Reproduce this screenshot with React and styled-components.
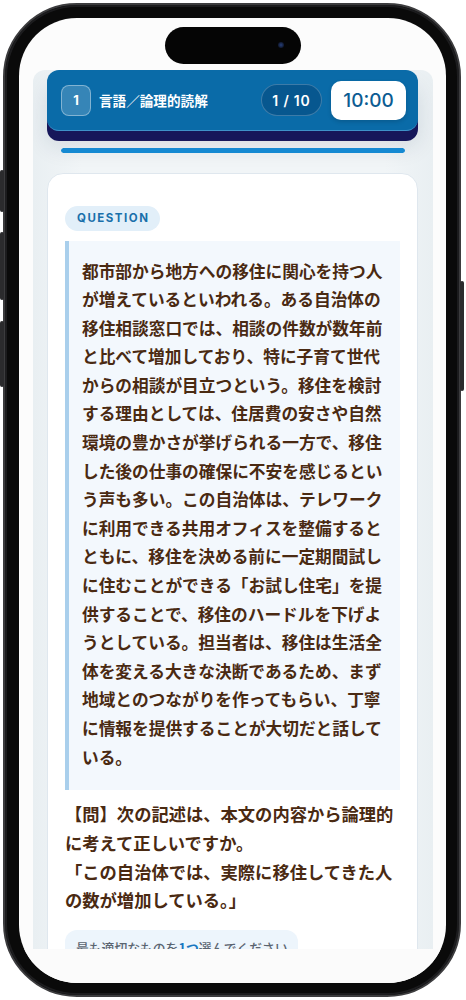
import React from "react"
import styled, { createGlobalStyle } from "styled-components"

const GlobalStyle = createGlobalStyle`
  html, body {
    margin: 0;
    padding: 0;
    background: #ffffff;
  }
  * { box-sizing: border-box; }
`

const passage =
  "都市部から地方への移住に関心を持つ人が増えているといわれる。ある自治体の移住相談窓口では、相談の件数が数年前と比べて増加しており、特に子育て世代からの相談が目立つという。移住を検討する理由としては、住居費の安さや自然環境の豊かさが挙げられる一方で、移住した後の仕事の確保に不安を感じるという声も多い。この自治体は、テレワークに利用できる共用オフィスを整備するとともに、移住を決める前に一定期間試しに住むことができる「お試し住宅」を提供することで、移住のハードルを下げようとしている。担当者は、移住は生活全体を変える大きな決断であるため、まず地域とのつながりを作ってもらい、丁寧に情報を提供することが大切だと話している。"

const sideButtons = [
  { side: "left", top: 165, h: 42 },
  { side: "left", top: 227, h: 68 },
  { side: "left", top: 316, h: 66 },
  { side: "right", top: 276, h: 110 },
]

export default function App() {
  const current = 1
  const total = 10
  const limit = 600
  const remaining = 600
  const mm = String(Math.floor(remaining / 60)).padStart(2, "0")
  const ss = String(remaining % 60).padStart(2, "0")

  return (
    <>
      <GlobalStyle />
      <Page>
        <Phone>
          {sideButtons.map((b, i) => (
            <SideButton key={i} $side={b.side} style={{ top: b.top, height: b.h }} />
          ))}
          <Screen>
            <Island>
              <Camera />
            </Island>
            <AppPanel>
              <Header>
                <Section>{current}</Section>
                <Title>言語／論理的読解</Title>
                <Counter>{current} / {total}</Counter>
                <Timer>{mm}:{ss}</Timer>
              </Header>
              <Progress>
                <ProgressFill style={{ width: `${(remaining / limit) * 100}%` }} />
              </Progress>
              <Card>
                <Tag>QUESTION</Tag>
                <Passage>{passage}</Passage>
                <Prompt>
                  【問】次の記述は、本文の内容から論理的に考えて正しいですか。
                  <br />
                  「この自治体では、実際に移住してきた人の数が増加している。」
                </Prompt>
                <Hint>
                  最も適切なものを<strong>1つ</strong>選んでください
                </Hint>
              </Card>
            </AppPanel>
            <HomeArea />
          </Screen>
        </Phone>
      </Page>
    </>
  )
}

const Page = styled.div`
  width: 466px;
  height: 1000px;
  padding: 3px;
  background: #ffffff;
`

const Phone = styled.div`
  position: relative;
  width: 458px;
  height: 994px;
  padding: 13px 13px 12px 14px;
  border-radius: 74px;
  background: #0a0a0a;
  border: 2px solid #3c3c3e;
  box-shadow: inset 0 0 0 2px #1c1c1e;
  display: flex;
`

const SideButton = styled.div`
  position: absolute;
  width: 4px;
  ${(p) => (p.$side === "left" ? "left: -5px;" : "right: -5px;")}
  border-radius: 2px;
  background: #2b2b2d;
`

const Screen = styled.div`
  position: relative;
  flex: 1;
  display: flex;
  flex-direction: column;
  padding-top: 52px;
  border-radius: 58px;
  background: #fcfcfc;
  overflow: hidden;
`

const Island = styled.div`
  position: absolute;
  top: 9px;
  left: 146px;
  width: 136px;
  height: 37px;
  border-radius: 19px;
  background: #050505;
`

const Camera = styled.span`
  position: absolute;
  right: 17px;
  top: 15px;
  width: 6px;
  height: 6px;
  border-radius: 50%;
  background: radial-gradient(circle, #27407a 0%, #10182e 70%);
`

const AppPanel = styled.div`
  flex: 1;
  margin: 0 13px 0 14px;
  padding: 0 15px 0 14px;
  border-radius: 12px 12px 0 0;
  background: linear-gradient(90deg, #e9eff2 0%, #f1f5f7 12%, #f1f5f7 88%, #e9eff2 100%);
  overflow: hidden;
  font-family: "Noto Sans CJK JP", "Noto Sans", sans-serif;
`

const Header = styled.div`
  display: flex;
  align-items: center;
  height: 61px;
  padding: 0 12px 0 14px;
  border-radius: 12px;
  background: #0a6ba8;
  border-bottom: 1.5px solid #3f92c9;
  box-shadow: 0 10px 0 #16175a, 0 16px 22px rgba(20, 40, 70, 0.12);
`

const Section = styled.div`
  width: 30px;
  height: 31px;
  display: flex;
  align-items: center;
  justify-content: center;
  border-radius: 8px;
  background: rgba(255, 255, 255, 0.18);
  border: 1px solid rgba(255, 255, 255, 0.38);
  color: #ffffff;
  font-family: Inter, "Noto Sans", sans-serif;
  font-size: 13px;
  font-weight: 700;
`

const Title = styled.div`
  flex: 1;
  margin-left: 8px;
  color: #ffffff;
  font-size: 13.6px;
  font-weight: 700;
`

const Counter = styled.div`
  width: 61px;
  height: 32px;
  display: flex;
  align-items: center;
  justify-content: center;
  border-radius: 16px;
  background: rgba(0, 35, 80, 0.28);
  border: 1px solid rgba(255, 255, 255, 0.22);
  color: #ffffff;
  font-family: Inter, "Noto Sans", sans-serif;
  font-size: 14px;
  font-weight: 600;
  letter-spacing: 0.8px;
  white-space: pre;
`

const Timer = styled.div`
  width: 75px;
  height: 39px;
  margin-left: 9px;
  display: flex;
  align-items: center;
  justify-content: center;
  border-radius: 10px;
  background: #ffffff;
  box-shadow: 0 2px 4px rgba(0, 0, 0, 0.15);
  color: #0c5c92;
  font-family: Inter, "Noto Sans", sans-serif;
  font-size: 19px;
  font-weight: 500;
`

const Progress = styled.div`
  height: 5px;
  margin: 17px 13px 0 14px;
  border-radius: 3px;
  background: #d4e3ee;
  overflow: hidden;
`

const ProgressFill = styled.div`
  height: 100%;
  border-radius: 3px;
  background: #1589d2;
`

const Card = styled.div`
  margin-top: 20px;
  padding: 29px 17px 0 17px;
  border-radius: 16px;
  border: 1px solid #dfe7ee;
  background: #ffffff;
  min-height: 900px;
`

const Tag = styled.div`
  display: inline-flex;
  align-items: center;
  height: 25px;
  padding: 0 11px 0 12px;
  border-radius: 13px;
  background: #e2eff9;
  color: #1a70ab;
  font-family: Inter, "Noto Sans", sans-serif;
  font-size: 11.5px;
  font-weight: 700;
  letter-spacing: 1.5px;
`

const Passage = styled.p`
  margin: 10px 0 0 0;
  padding: 16px 12px 19px 13px;
  border-left: 4px solid #a9cfec;
  background: #f3f8fd;
  color: #4a2a12;
  font-size: 16.7px;
  font-weight: 700;
  line-height: 28.6px;
`

const Prompt = styled.p`
  margin: 10px 0 0 0;
  color: #4a2a12;
  font-size: 17.3px;
  font-weight: 700;
  line-height: 28.7px;
`

const Hint = styled.div`
  display: inline-block;
  margin-top: 15px;
  padding: 9px 10px 8px 11px;
  border-radius: 12px;
  background: #edf5fc;
  color: #5a6470;
  font-size: 12.8px;
  font-weight: 500;
  line-height: 1.45;
  strong {
    color: #1877c0;
    font-weight: 700;
  }
`

const HomeArea = styled.div`
  height: 34px;
  background: #fbfbfb;
`
